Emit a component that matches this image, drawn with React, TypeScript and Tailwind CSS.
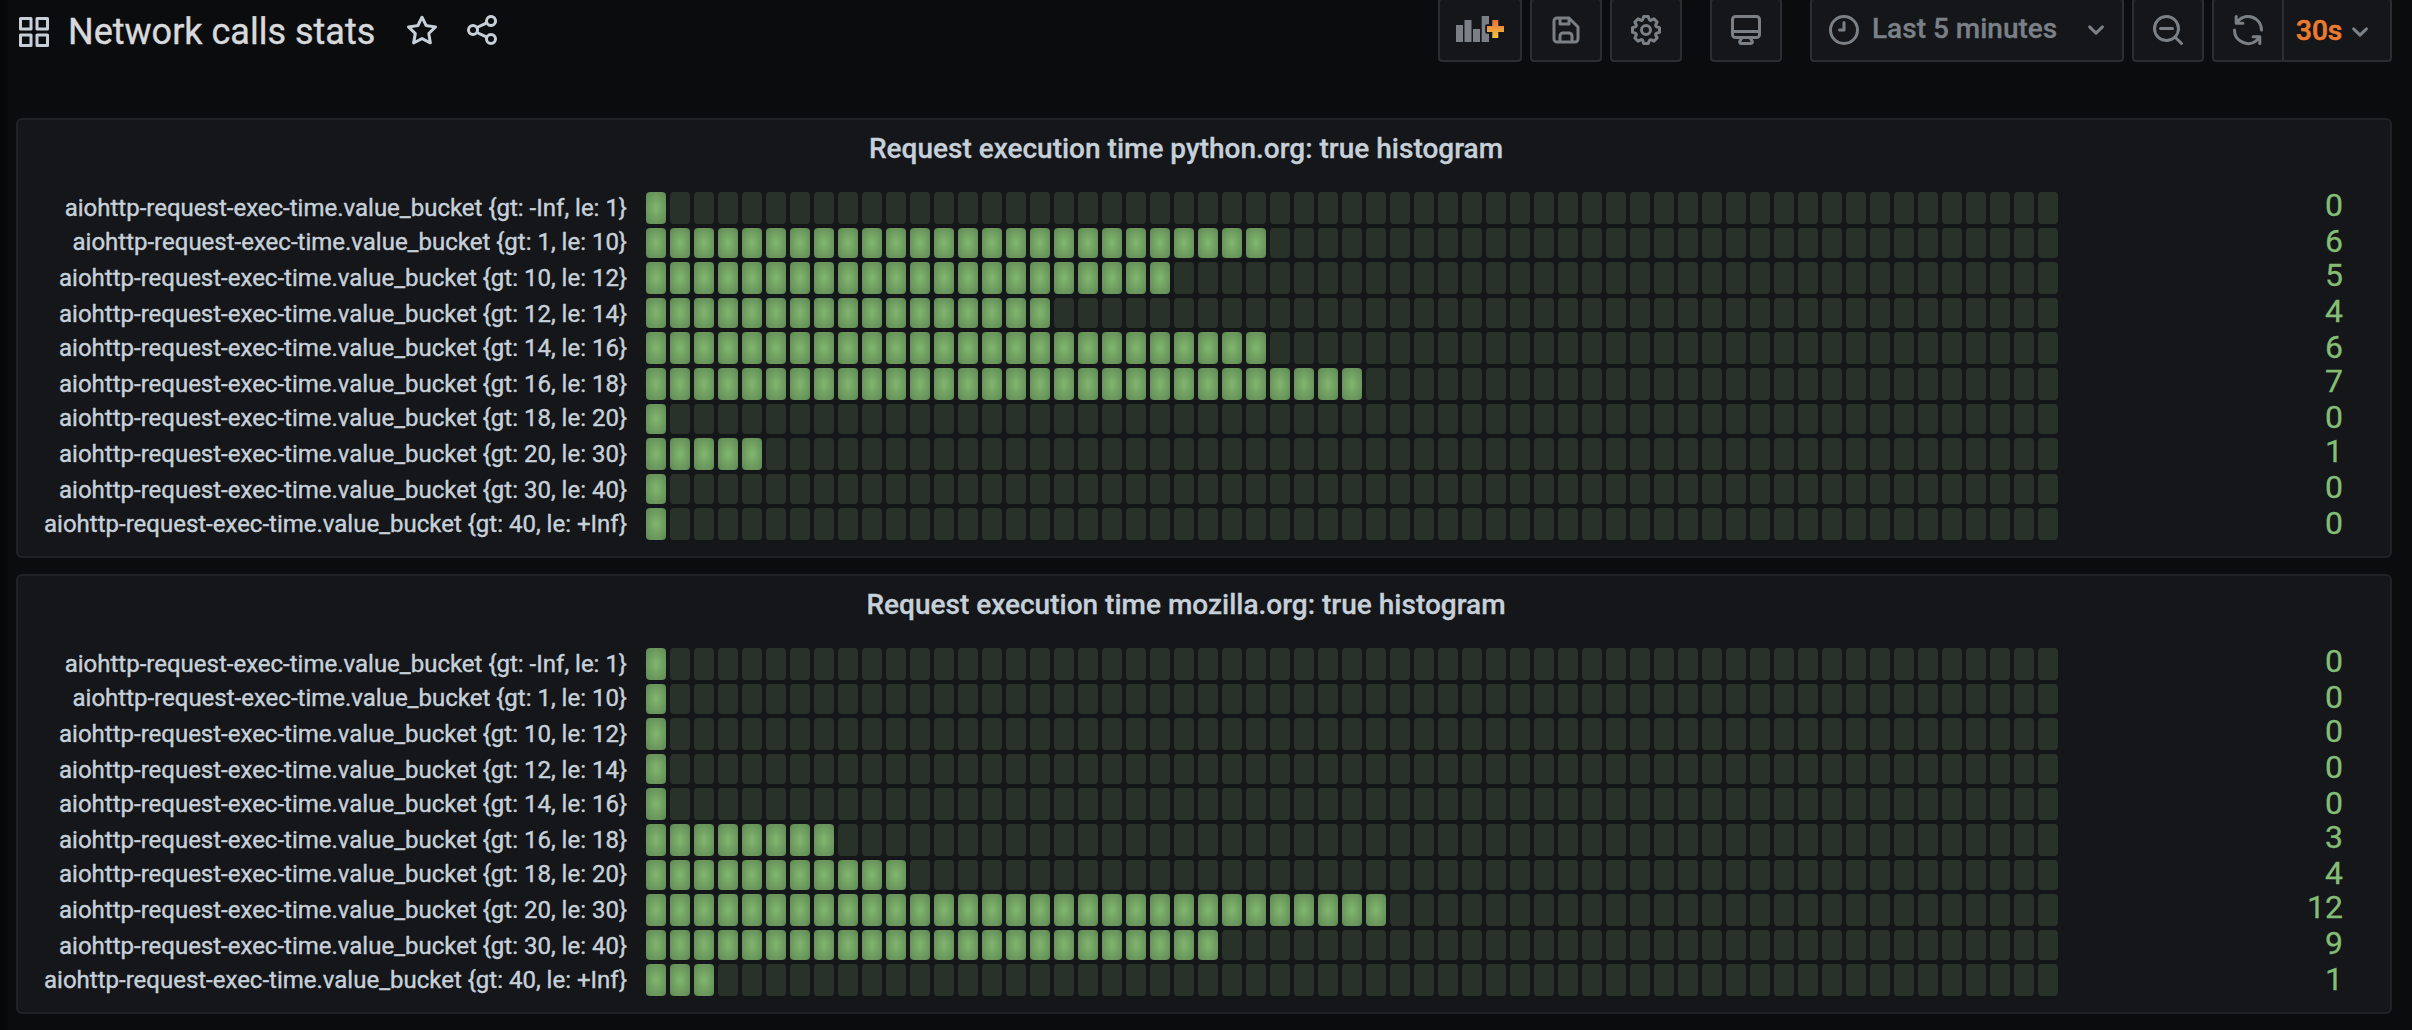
import React from "react";

const ICONS = {
  apps: "M10,13H3a1,1,0,0,0-1,1v7a1,1,0,0,0,1,1h7a1,1,0,0,0,1-1V14A1,1,0,0,0,10,13ZM9,20H4V15H9ZM21,2H14a1,1,0,0,0-1,1v7a1,1,0,0,0,1,1h7a1,1,0,0,0,1-1V3A1,1,0,0,0,21,2ZM20,9H15V4h5Zm1,4H14a1,1,0,0,0-1,1v7a1,1,0,0,0,1,1h7a1,1,0,0,0,1-1V14A1,1,0,0,0,21,13Zm-1,7H15V15h5ZM10,2H3A1,1,0,0,0,2,3v7a1,1,0,0,0,1,1h7a1,1,0,0,0,1-1V3A1,1,0,0,0,10,2ZM9,9H4V4H9Z",
  star: "M22,9.67A1,1,0,0,0,21.14,9l-5.69-.83L12.9,3a1,1,0,0,0-1.8,0L8.55,8.16,2.86,9a1,1,0,0,0-.81.68,1,1,0,0,0,.25,1l4.13,4-1,5.68A1,1,0,0,0,6.9,21.44L12,18.77l5.1,2.67a.93.93,0,0,0,.46.12,1,1,0,0,0,.59-.19,1,1,0,0,0,.4-1l-1-5.68,4.13-4A1,1,0,0,0,22,9.67Zm-6.15,4a1,1,0,0,0-.29.88l.72,4.2-3.76-2a1.06,1.06,0,0,0-.94,0l-3.76,2,.72-4.2a1,1,0,0,0-.29-.88l-3-3,4.21-.61a1,1,0,0,0,.76-.55L12,5.7l1.88,3.82a1,1,0,0,0,.76.55l4.21.61Z",
  share: "M18,14a4,4,0,0,0-3.08,1.48l-5.1-2.35a3.64,3.64,0,0,0,0-2.26l5.1-2.35A4,4,0,1,0,14,6a4.17,4.17,0,0,0,.07.71L8.79,9.14a4,4,0,1,0,0,5.72l5.28,2.43A4.17,4.17,0,0,0,14,18a4,4,0,1,0,4-4ZM18,4a2,2,0,1,1-2,2A2,2,0,0,1,18,4ZM6,14a2,2,0,1,1,2-2A2,2,0,0,1,6,14Zm12,6a2,2,0,1,1,2-2A2,2,0,0,1,18,20Z",
  save: "M20.71,9.29l-6-6a1,1,0,0,0-.32-.21A1.09,1.09,0,0,0,14,3H6A3,3,0,0,0,3,6V18a3,3,0,0,0,3,3H18a3,3,0,0,0,3-3V10A1,1,0,0,0,20.71,9.29ZM9,5h4V7H9Zm6,14H9V16a1,1,0,0,1,1-1h4a1,1,0,0,1,1,1Zm4-1a1,1,0,0,1-1,1H17V16a3,3,0,0,0-3-3H10a3,3,0,0,0-3,3v3H6a1,1,0,0,1-1-1V6A1,1,0,0,1,6,5H7V8A1,1,0,0,0,8,9h6a1,1,0,0,0,1-1V6.41l4,4Z",
  cog: "M21.32,9.55l-1.89-.63.89-1.78A1,1,0,0,0,20.13,6L18,3.87a1,1,0,0,0-1.15-.19l-1.78.89-.63-1.89A1,1,0,0,0,13.5,2h-3a1,1,0,0,0-.95.68L8.92,4.57,7.14,3.68A1,1,0,0,0,6,3.87L3.87,6a1,1,0,0,0-.19,1.15l.89,1.78-1.89.63A1,1,0,0,0,2,10.5v3a1,1,0,0,0,.68.95l1.89.63-.89,1.78A1,1,0,0,0,3.87,18L6,20.13a1,1,0,0,0,1.15.19l1.78-.89.63,1.89a1,1,0,0,0,.95.68h3a1,1,0,0,0,.95-.68l.63-1.89,1.78.89A1,1,0,0,0,18,20.13L20.13,18a1,1,0,0,0,.19-1.15l-.89-1.78,1.89-.63A1,1,0,0,0,22,13.5v-3A1,1,0,0,0,21.32,9.55ZM20,12.78l-1.2.4A2,2,0,0,0,17.64,16l.57,1.14-1.1,1.1L16,17.64a2,2,0,0,0-2.79,1.16l-.4,1.2H11.22l-.4-1.2A2,2,0,0,0,8,17.64l-1.14.57-1.1-1.1L6.36,16A2,2,0,0,0,5.2,13.18L4,12.78V11.22l1.2-.4A2,2,0,0,0,6.36,8L5.79,6.89l1.1-1.1L8,6.36A2,2,0,0,0,10.82,5.2l.4-1.2h1.56l.4,1.2A2,2,0,0,0,16,6.36l1.14-.57,1.1,1.1L17.64,8a2,2,0,0,0,1.16,2.79l1.2.4ZM12,8a4,4,0,1,0,4,4A4,4,0,0,0,12,8Zm0,6a2,2,0,1,1,2-2A2,2,0,0,1,12,14Z",
  monitor: "M19,2H5A3,3,0,0,0,2,5V15a3,3,0,0,0,3,3H7.64l-.58,1a2,2,0,0,0,0,2,2,2,0,0,0,1.75,1h6.46A2,2,0,0,0,17,21a2,2,0,0,0,0-2l-.59-1H19a3,3,0,0,0,3-3V5A3,3,0,0,0,19,2ZM8.77,20,10,18H14l1.2,2ZM20,15a1,1,0,0,1-1,1H5a1,1,0,0,1-1-1V14H20Zm0-3H4V5A1,1,0,0,1,5,4H19a1,1,0,0,1,1,1Z",
  clock: "M12,2A10,10,0,1,0,22,12,10,10,0,0,0,12,2Zm0,18a8,8,0,1,1,8-8A8,8,0,0,1,12,20ZM12,6a1,1,0,0,0-1,1v4H9a1,1,0,0,0,0,2h3a1,1,0,0,0,1-1V7A1,1,0,0,0,12,6Z",
  angleDown: "M17,9.17a1,1,0,0,0-1.41,0L12,12.71,8.46,9.17a1,1,0,0,0-1.41,0,1,1,0,0,0,0,1.42l4.24,4.24a1,1,0,0,0,1.42,0L17,10.59A1,1,0,0,0,17,9.17Z",
  zoomOut: "M21.71,20.29,18,16.61A9,9,0,1,0,16.61,18l3.68,3.68a1,1,0,0,0,1.42,0A1,1,0,0,0,21.71,20.29ZM11,18a7,7,0,1,1,7-7A7,7,0,0,1,11,18Zm4-8H7a1,1,0,0,0,0,2h8a1,1,0,0,0,0-2Z",
  sync: "M19.91,15.51H15.38a1,1,0,0,0,0,2h2.4A8,8,0,0,1,4,12a1,1,0,1,0-2,0,10,10,0,0,0,16.88,7.23V21a1,1,0,0,0,2,0V16.5A1,1,0,0,0,19.91,15.51ZM12,2A10,10,0,0,0,5.12,4.77V3a1,1,0,0,0-2,0V7.5a1,1,0,0,0,1,1h4.5a1,1,0,0,0,0-2H6.22A8,8,0,0,1,20,12a1,1,0,0,0,2,0A10,10,0,0,0,12,2Z",
};

function Icon({ name, className = "" }: { name: keyof typeof ICONS; className?: string }) {
  return (
    <svg viewBox="0 0 24 24" fill="currentColor" className={`size-9 shrink-0 ${className}`}>
      <path d={ICONS[name]} />
    </svg>
  );
}

function AddPanelIcon() {
  return (
    <svg viewBox="0 0 48 26" className="h-[26px] w-12 shrink-0">
      <defs>
        <linearGradient id="plus" x1="0" y1="0" x2="0" y2="1">
          <stop offset="0" stopColor="#e8703f" />
          <stop offset="1" stopColor="#f0c63f" />
        </linearGradient>
      </defs>
      <g fill="#7b8087">
        <rect x="0" y="9" width="7" height="17" />
        <rect x="8.5" y="4" width="7" height="22" />
        <rect x="17" y="13" width="7" height="13" />
        <rect x="25.7" y="0" width="7.3" height="26" />
      </g>
      <path
        d="M36.3 4h6v6h5.7v6h-5.7v6h-6v-6h-5.3v-6h5.3z"
        fill="url(#plus)"
        stroke="#141619"
        strokeWidth="3.6"
        strokeLinejoin="round"
        paintOrder="stroke"
      />
    </svg>
  );
}

const BUTTON = "flex h-16 items-center rounded border-2 border-[#2c2d30] bg-[#141619] text-[#7b8087]";

const ROWS = [
  { label: "{gt: -Inf, le: 1}", labelTop: "pt-1", valueTop: "-mt-[3px]" },
  { label: "{gt: 1, le: 10}", labelTop: "pt-0.5", valueTop: "-mt-[3px]" },
  { label: "{gt: 10, le: 12}", labelTop: "pt-1", valueTop: "-mt-[3px]" },
  { label: "{gt: 12, le: 14}", labelTop: "pt-1", valueTop: "-mt-[3px]" },
  { label: "{gt: 14, le: 16}", labelTop: "pt-1", valueTop: "-mt-px" },
  { label: "{gt: 16, le: 18}", labelTop: "pt-1", valueTop: "-mt-[3px]" },
  { label: "{gt: 18, le: 20}", labelTop: "pt-0.5", valueTop: "-mt-[3px]" },
  { label: "{gt: 20, le: 30}", labelTop: "pt-1", valueTop: "-mt-[3px]" },
  { label: "{gt: 30, le: 40}", labelTop: "pt-1", valueTop: "-mt-[3px]" },
  { label: "{gt: 40, le: +Inf}", labelTop: "pt-1", valueTop: "-mt-px" },
];

const CELL_COUNT = 59;

type PanelData = { title: string; values: number[]; lit: number[] };

const PANELS: PanelData[] = [
  {
    title: "Request execution time python.org: true histogram",
    values: [0, 6, 5, 4, 6, 7, 0, 1, 0, 0],
    lit: [1, 26, 22, 17, 26, 30, 1, 5, 1, 1],
  },
  {
    title: "Request execution time mozilla.org: true histogram",
    values: [0, 0, 0, 0, 0, 3, 4, 12, 9, 1],
    lit: [1, 1, 1, 1, 1, 8, 11, 31, 24, 3],
  },
];

function Gauge({ row, value, lit }: { row: (typeof ROWS)[number]; value: number; lit: number }) {
  return (
    <div className="flex h-full min-h-0 items-stretch">
      <div
        className={`h-0 w-[609px] whitespace-nowrap text-right text-2xl leading-none text-[#c7d0d9] [-webkit-text-stroke:0.4px] ${row.labelTop}`}
      >
        aiohttp-request-exec-time.value_bucket {row.label}
      </div>
      <div className="ml-[19px] flex gap-1">
        {Array.from({ length: CELL_COUNT }, (_, i) => (
          <div
            key={i}
            className={
              i < lit
                ? "w-5 rounded bg-[radial-gradient(#7eb26d_10%,#5f8753)]"
                : "w-5 rounded bg-[#293229]"
            }
          />
        ))}
      </div>
      <div
        className={`h-0 flex-1 pr-[47px] text-right text-[32px] leading-none text-[#85bd74] [-webkit-text-stroke:0.3px] ${row.valueTop}`}
      >
        {value}
      </div>
    </div>
  );
}

function Panel({ title, values, lit }: PanelData) {
  return (
    <section className="h-[440px] rounded-md border-2 border-[#202226] bg-[#141619]">
      <h2 className="flex h-[72px] items-center justify-center pr-9 pb-3.5 text-[28px] font-medium text-[#c7d0d9] [-webkit-text-stroke:0.3px]">
        {title}
      </h2>
      <div className="grid grid-rows-[32px_30px_32px_30px_32px_32px_30px_32px_30px_32px] gap-y-1">
        {ROWS.map((row, i) => (
          <Gauge key={row.label} row={row} value={values[i]} lit={lit[i]} />
        ))}
      </div>
    </section>
  );
}

export default function App() {
  return (
    <div className="h-[1030px] w-[2412px] overflow-hidden bg-[#0b0c0e] bg-[linear-gradient(to_right,#050607,#0b0c0e_12px)] font-[Roboto,sans-serif]">
      <header className="flex h-[118px] items-start justify-between pr-5 pl-4">
        <div className="flex h-[60px] items-center text-[#c7d0d9]">
          <Icon name="apps" className="mt-1" />
          <h1 className="mt-[3px] ml-4 w-[336px] whitespace-nowrap text-4xl text-[#d8d9da] [-webkit-text-stroke:0.4px]">
            Network calls stats
          </h1>
          <Icon name="star" />
          <Icon name="share" className="ml-6" />
        </div>
        <div className="-mt-0.5 flex">
          <button className={`${BUTTON} w-[84px] justify-center pb-0.5`}>
            <AddPanelIcon />
          </button>
          <button className={`${BUTTON} ml-2 w-[72px] justify-center`}>
            <Icon name="save" />
          </button>
          <button className={`${BUTTON} ml-2 w-[72px] justify-center`}>
            <Icon name="cog" />
          </button>
          <button className={`${BUTTON} ml-7 w-[72px] justify-center`}>
            <Icon name="monitor" />
          </button>
          <button className={`${BUTTON} ml-7 w-[314px] pl-3.5`}>
            <Icon name="clock" />
            <span className="ml-2.5 w-[206px] whitespace-nowrap pb-0.5 text-left text-[28px] font-medium [-webkit-text-stroke:0.3px]">
              Last 5 minutes
            </span>
            <Icon name="angleDown" />
          </button>
          <button className={`${BUTTON} ml-2 w-[72px] justify-center`}>
            <Icon name="zoomOut" />
          </button>
          <div className={`${BUTTON} ml-2 w-[180px]`}>
            <button className="flex h-full w-[70px] items-center justify-center border-r-2 border-[#2c2d30]">
              <Icon name="sync" />
            </button>
            <button className="flex h-full flex-1 items-center pl-3">
              <span className="mt-0.5 w-[46px] text-left text-[28px] font-medium text-[#eb7b2e] [-webkit-text-stroke:0.6px]">
                30s
              </span>
              <Icon name="angleDown" className="mt-1" />
            </button>
          </div>
        </div>
      </header>
      <main className="flex flex-col gap-4 pr-5 pl-4">
        {PANELS.map((panel) => (
          <Panel key={panel.title} {...panel} />
        ))}
      </main>
    </div>
  );
}
